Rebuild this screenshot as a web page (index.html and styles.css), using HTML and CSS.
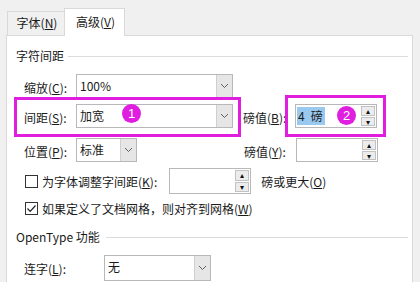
FILE: index.html
```html
<!DOCTYPE html>
<html lang="zh-CN">
<head>
<meta charset="utf-8">
<link rel="stylesheet" href="styles.css">
</head>
<body>
<div class="tabs">
  <div class="tab">字体(<u>N</u>)</div>
  <div class="tab active">高级(<u>V</u>)</div>
</div>
<div class="panel">
  <div class="group-title g1"><span>字符间距</span><i class="rule"></i></div>

  <div class="row r1">
    <span class="lbl">缩放(<u>C</u>):</span>
    <div class="combo wide"><span class="val">100%</span><span class="drop"><svg width="9" height="6" viewBox="0 0 9 6"><path d="M1 1 L4.5 4.5 L8 1" fill="none" stroke="#606060" stroke-width="1"/></svg></span></div>
  </div>

  <div class="row r2">
    <span class="lbl">间距(<u>S</u>):</span>
    <div class="combo wide"><span class="val">加宽</span><span class="drop"><svg width="9" height="6" viewBox="0 0 9 6"><path d="M1 1 L4.5 4.5 L8 1" fill="none" stroke="#606060" stroke-width="1"/></svg></span></div>
    <span class="lbl rlbl">磅值(<u>B</u>):</span>
    <div class="spin"><span class="val"><span class="sel">4<span class="sp"> </span>磅</span></span><span class="btns"><span class="sb">&#9652;</span><span class="sb">&#9662;</span></span></div>
  </div>

  <div class="row r3">
    <span class="lbl">位置(<u>P</u>):</span>
    <div class="combo narrow"><span class="val">标准</span><span class="drop"><svg width="9" height="6" viewBox="0 0 9 6"><path d="M1 1 L4.5 4.5 L8 1" fill="none" stroke="#606060" stroke-width="1"/></svg></span></div>
    <span class="lbl rlbl rlbl3">磅值(<u>Y</u>):</span>
    <div class="spin"><span class="val"></span><span class="btns"><span class="sb">&#9652;</span><span class="sb">&#9662;</span></span></div>
  </div>

  <div class="row r4">
    <span class="chk"></span>
    <span class="ctext">为字体调整字间距(<u>K</u>):</span>
    <div class="spin kspin"><span class="val"></span><span class="btns"><span class="sb">&#9652;</span><span class="sb">&#9662;</span></span></div>
    <span class="after">磅或更大(<u>O</u>)</span>
  </div>

  <div class="row r5">
    <span class="chk on"><svg width="11" height="11" viewBox="0 0 11 11"><path d="M1.5 5.5 L4.2 8.3 L9.5 2.5" fill="none" stroke="#222" stroke-width="1.2"/></svg></span>
    <span class="ctext">如果定义了文档网格，则对齐到网格(<u>W</u>)</span>
  </div>

  <div class="group-title g2"><span>OpenType 功能</span><i class="rule"></i></div>

  <div class="row r6">
    <span class="lbl lbl6">连字(<u>L</u>):</span>
    <div class="combo lig"><span class="val">无</span><span class="drop"><svg width="9" height="6" viewBox="0 0 9 6"><path d="M1 1 L4.5 4.5 L8 1" fill="none" stroke="#606060" stroke-width="1"/></svg></span></div>
  </div>

  <div class="mark mark1"></div>
  <div class="mark mark2"></div>
  <div class="badge badge1">1</div>
  <div class="badge badge2">2</div>
</div>
</body>
</html>
```

FILE: styles.css
```css
* { box-sizing: border-box; }
html, body { margin: 0; padding: 0; }
body {
  width: 420px;
  height: 282px;
  overflow: hidden;
  background: #f0f0f0;
  font-family: "Noto Sans CJK SC", "Noto Sans", sans-serif;
  font-size: 12px;
  color: #1a1a1a;
}
u { text-decoration: underline; text-underline-offset: 1px; }

.tabs {
  display: flex;
  align-items: flex-end;
  height: 35px;
  padding-left: 7px;
}
.tab {
  width: 57px;
  height: 24px;
  line-height: 22px;
  padding-left: 2px;
  text-align: center;
  border: 1px solid #d9d9d9;
  border-bottom: none;
  border-right: none;
  background: #f0f0f0;
}
.tab.active {
  width: 61px;
  height: 28px;
  line-height: 26px;
  background: #fff;
  border-right: 1px solid #d9d9d9;
  margin-bottom: -1px;
  position: relative;
  z-index: 2;
}

.panel {
  position: relative;
  margin-left: 6px;
  width: 407px;
  height: 260px;
  background: #fff;
  border: 1px solid #d9d9d9;
  border-bottom: none;
  padding: 9px 4px 0 17px;
}

.group-title {
  display: flex;
  align-items: center;
  height: 20px;
  margin-left: -8px;
  gap: 4px;
}
.group-title .rule {
  flex: 1;
  height: 1px;
  background: #dcdcdc;
  margin-top: 2px;
}
.g2 { margin-top: 8px; gap: 6px; }

.row {
  display: flex;
  align-items: center;
}
.r1 { margin-top: 9px; height: 24px; }
.r2 { margin-top: 6px; height: 24px; }
.r3 { margin-top: 10px; height: 24px; }
.r4 { margin-top: 7px; height: 24px; }
.r5 { margin-top: 5px; height: 20px; }
.r6 { margin-top: 9px; height: 25px; }

.lbl { width: 52px; padding-top: 2px; }
.lbl6 { width: 80px; }
.rlbl { margin-left: 10px; }
.rlbl3 { margin-left: 107px; }

.combo {
  display: flex;
  height: 24px;
  border: 1px solid #b8b8b8;
  background: #fff;
}
.combo .val { flex: 1; padding-left: 3px; line-height: 22px; }
.combo .drop {
  width: 16px;
  border-left: 1px solid #d0d0d0;
  background: #e6e6e6;
  display: flex;
  align-items: center;
  justify-content: center;
}
.wide { width: 157px; }
.narrow { width: 61px; }
.lig { width: 107px; height: 26px; }

.spin {
  display: flex;
  width: 82px;
  height: 24px;
  border: 1px solid #b8b8b8;
  background: #fff;
}
.spin .val { flex: 1; padding: 2px 0 2px 1px; line-height: 18px; }
.spin .sel { display: inline-block; background: #99c9ef; padding: 0 2px 0 1px; line-height: 18px; }
.spin .sp { display: inline-block; width: 6px; }
.spin .btns {
  width: 15px;
  display: flex;
  flex-direction: column;
  gap: 1px;
  padding: 1px 1px 1px 0;
}
.spin .sb {
  flex: 1;
  background: #ececec;
  border: 1px solid #c2c2c2;
  font-size: 8px;
  line-height: 7px;
  text-align: center;
  color: #111;
  overflow: hidden;
}
.kspin { margin-left: 12px; width: 82px; height: 26px; }
.after { margin-left: 10px; }

.chk {
  width: 13px;
  height: 13px;
  border: 1px solid #333;
  margin-left: 1px;
  margin-right: 4px;
  display: flex;
  align-items: center;
  justify-content: center;
  background: #fff;
}

.mark {
  position: absolute;
  border: 3px solid #e01ee0;
}
.mark1 { left: 7px; top: 61px; width: 227px; height: 40px; }
.mark2 { left: 278px; top: 59px; width: 101px; height: 42px; }

.badge {
  position: absolute;
  width: 19px;
  height: 19px;
  border-radius: 50%;
  background: #e01ee0;
  color: #fff;
  font-family: "Liberation Sans", sans-serif;
  font-size: 13px;
  line-height: 19px;
  text-align: center;
}
.badge1 { left: 115px; top: 68px; }
.badge2 { left: 330px; top: 70px; }
```
